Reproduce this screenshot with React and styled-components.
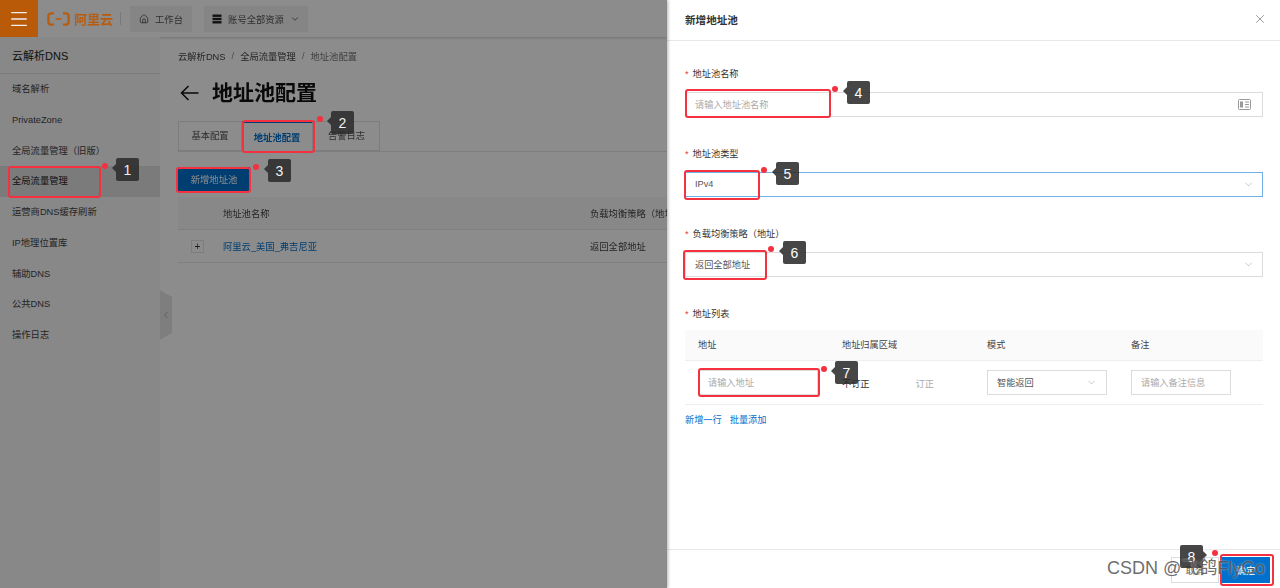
import React from 'react';
import styled, { createGlobalStyle } from 'styled-components';
import { ChevronDown, ChevronLeft, Home, Menu, X } from 'lucide-react';

const GlobalStyle = createGlobalStyle`
  html, body {
    margin: 0;
    padding: 0;
    background: #8c8c8c;
  }
  body {
    font-family: "Liberation Sans", "Noto Sans CJK SC", sans-serif;
    font-size: 9px;
    color: #333;
  }
  * {
    box-sizing: border-box;
  }
`;

const navItems = [
  '域名解析',
  'PrivateZone',
  '全局流量管理（旧版）',
  '全局流量管理',
  '运营商DNS缓存刷新',
  'IP地理位置库',
  '辅助DNS',
  '公共DNS',
  '操作日志',
];

const marks = [
  { n: 1, x: 8, y: 166, w: 93, h: 32, dotX: 105, dotY: 166, badgeX: 116, badgeY: 158 },
  { n: 2, x: 242, y: 120, w: 73, h: 33, dotX: 320, dotY: 119, badgeX: 331, badgeY: 111 },
  { n: 3, x: 176, y: 167, w: 75, h: 26, dotX: 256, dotY: 167, badgeX: 268, badgeY: 159 },
  { n: 4, x: 685, y: 89, w: 146, h: 29, dotX: 835, dotY: 89, badgeX: 847, badgeY: 81 },
  { n: 5, x: 684, y: 170, w: 76, h: 30, dotX: 764, dotY: 170, badgeX: 776, badgeY: 162 },
  { n: 6, x: 683, y: 250, w: 84, h: 30, dotX: 771, dotY: 249, badgeX: 783, badgeY: 241 },
  { n: 7, x: 698, y: 368, w: 122, h: 29, dotX: 824, dotY: 369, badgeX: 835, badgeY: 361 },
  { n: 8, x: 1220, y: 554, w: 54, h: 32, dotX: 1215, dotY: 553, badgeX: 1180, badgeY: 545, flip: true },
];

export default function App() {
  return (
    <Page>
      <GlobalStyle />
      <Console>
        <TopBar>
          <MenuCell>
            <Menu size={22} strokeWidth={1.4} color="#eee" />
          </MenuCell>
          <Logo>
            <svg width="23" height="14" viewBox="0 0 23 14" fill="none" stroke="#b85c10" strokeWidth="2.4">
              <path d="M7 1.4H4a2.6 2.6 0 0 0-2.6 2.6v6A2.6 2.6 0 0 0 4 12.6h3" />
              <path d="M16 1.4h3A2.6 2.6 0 0 1 21.6 4v6a2.6 2.6 0 0 1-2.6 2.6h-3" />
              <path d="M8.5 7h6" strokeWidth="1.6" />
            </svg>
            <LogoText>阿里云</LogoText>
          </Logo>
          <BarDivider />
          <BarButton $width="62px">
            <Home size={10} strokeWidth={2} />
            工作台
          </BarButton>
          <BarButton $width="104px">
            <svg width="10" height="10" viewBox="0 0 10 10" fill="#222">
              <rect x="0.5" y="0.5" width="9" height="2.4" />
              <rect x="0.5" y="3.8" width="9" height="2.4" />
              <rect x="0.5" y="7.1" width="9" height="2.4" />
            </svg>
            账号全部资源
            <ChevronDown size={10} strokeWidth={2} />
          </BarButton>
        </TopBar>
        <Body>
          <Sidebar>
            <SideTitle>云解析DNS</SideTitle>
            {navItems.map((item, i) => (
              <NavItem key={item} $active={i === 3}>
                {item}
              </NavItem>
            ))}
            <Collapse>
              <ChevronLeft size={12} strokeWidth={1} color="#777" />
            </Collapse>
          </Sidebar>
          <Main>
            <Breadcrumb>
              <span>云解析DNS</span>
              <Slash>/</Slash>
              <span>全局流量管理</span>
              <Slash>/</Slash>
              <Faint>地址池配置</Faint>
            </Breadcrumb>
            <TitleRow>
              <svg width="19" height="16" viewBox="0 0 19 16" fill="none" stroke="#111" strokeWidth="1.5">
                <path d="M18.5 8H1.5M8.5 1L1.5 8l7 7" />
              </svg>
              <Title>地址池配置</Title>
            </TitleRow>
            <Tabs>
              <Tab>基本配置</Tab>
              <Tab $active>地址池配置</Tab>
              <Tab $wide>告警日志</Tab>
            </Tabs>
            <PrimaryButton>新增地址池</PrimaryButton>
            <PoolHead>
              <span />
              <span>地址池名称</span>
              <span>负载均衡策略（地址）</span>
            </PoolHead>
            <PoolRow>
              <Expand>+</Expand>
              <PoolLink>阿里云_美国_弗吉尼亚</PoolLink>
              <span>返回全部地址</span>
            </PoolRow>
          </Main>
        </Body>
      </Console>

      <Drawer>
        <DrawerHead>
          新增地址池
          <X size={14} strokeWidth={1} color="#555" />
        </DrawerHead>
        <Form>
          <Field>
            <Label>地址池名称</Label>
            <Control>
              <Placeholder>请输入地址池名称</Placeholder>
              <IdCard width="13" height="11" viewBox="0 0 13 11" fill="none">
                <rect x="0.5" y="0.5" width="12" height="10" rx="1" stroke="#999" />
                <rect x="2" y="2.5" width="3" height="6" fill="#999" />
                <path d="M7 3h4M7 5.5h4M7 8h4" stroke="#999" />
              </IdCard>
            </Control>
          </Field>
          <Field>
            <Label>地址池类型</Label>
            <Control $focus>
              IPv4
              <ChevronDown size={11} strokeWidth={1} color="#888" />
            </Control>
          </Field>
          <Field>
            <Label>负载均衡策略（地址）</Label>
            <Control>
              返回全部地址
              <ChevronDown size={11} strokeWidth={1} color="#888" />
            </Control>
          </Field>
          <Label>地址列表</Label>
          <AddressHead>
            <span>地址</span>
            <span>地址归属区域</span>
            <span>模式</span>
            <span>备注</span>
          </AddressHead>
          <AddressRow>
            <CellControl $width="120px">
              <Placeholder>请输入地址</Placeholder>
            </CellControl>
            <Correction>
              <span>不订正</span>
              <Disabled>订正</Disabled>
            </Correction>
            <CellControl $width="120px">
              智能返回
              <ChevronDown size={11} strokeWidth={1} color="#888" />
            </CellControl>
            <CellControl $width="100px">
              <Placeholder>请输入备注信息</Placeholder>
            </CellControl>
          </AddressRow>
          <Links>
            <span>新增一行</span>
            <span>批量添加</span>
          </Links>
        </Form>
        <DrawerFoot>
          <GhostButton>取消</GhostButton>
          <SubmitButton>确定</SubmitButton>
        </DrawerFoot>
      </Drawer>

      {marks.map((m) => (
        <React.Fragment key={m.n}>
          <RedBox $x={m.x} $y={m.y} $w={m.w} $h={m.h} />
          <RedDot $x={m.dotX} $y={m.dotY} />
          <Badge $x={m.badgeX} $y={m.badgeY} $flip={m.flip}>
            {m.n}
          </Badge>
        </React.Fragment>
      ))}
      <Watermark>CSDN @飞鸽FlyGo</Watermark>
    </Page>
  );
}

const Page = styled.div`
  position: relative;
  display: flex;
  width: 1280px;
  height: 588px;
  overflow: hidden;
  filter: blur(0.3px);
`;

const Console = styled.div`
  position: relative;
  display: flex;
  flex-direction: column;
  width: 667px;
  height: 100%;
  overflow: hidden;
  background: #fff;
  box-shadow: 1px 0 3px rgba(0, 0, 0, 0.3);
  z-index: 1;
  &::after {
    content: '';
    position: absolute;
    inset: 0;
    background: rgba(0, 0, 0, 0.45);
  }
`;

const TopBar = styled.div`
  display: flex;
  align-items: center;
  flex: none;
  height: 37px;
  background: #fff;
  box-shadow: 0 1px 3px rgba(0, 0, 0, 0.2);
`;

const MenuCell = styled.div`
  position: relative;
  z-index: 1;
  display: flex;
  align-items: center;
  justify-content: center;
  width: 38px;
  height: 100%;
  background: #b85a08;
`;

const Logo = styled.div`
  position: relative;
  z-index: 1;
  display: flex;
  align-items: center;
  gap: 4px;
  margin-left: 9px;
`;

const LogoText = styled.span`
  font-size: 13px;
  font-weight: 700;
  color: #b85c10;
`;

const BarDivider = styled.div`
  width: 1px;
  height: 13px;
  margin: 0 9px 0 7px;
  background: #ddd;
`;

const BarButton = styled.div`
  display: flex;
  align-items: center;
  justify-content: center;
  gap: 6px;
  width: ${(p) => p.$width};
  height: 26px;
  margin-right: 12px;
  background: #f2f2f2;
  font-size: 9.3px;
  color: #555;
  svg {
    flex: none;
  }
`;

const Body = styled.div`
  display: flex;
  flex: 1;
  min-height: 0;
`;

const Sidebar = styled.nav`
  position: relative;
  flex: none;
  width: 160px;
  background: #f7f7f7;
`;

const SideTitle = styled.div`
  height: 37px;
  padding: 10px 12px 0;
  border-bottom: 1px solid #e3e3e3;
  font-size: 11px;
  color: #222;
`;

const NavItem = styled.div`
  height: 30.75px;
  line-height: 30px;
  padding-left: 12px;
  font-size: 9.3px;
  color: ${(p) => (p.$active ? '#222' : '#444')};
  background: ${(p) => (p.$active ? '#e0e0e0' : 'transparent')};
`;

const Collapse = styled.div`
  position: absolute;
  top: 253px;
  left: 160px;
  display: flex;
  align-items: center;
  justify-content: center;
  width: 12px;
  height: 50px;
  background: #e6e6e6;
  clip-path: polygon(0 0, 100% 14%, 100% 86%, 0 100%);
`;

const Main = styled.main`
  display: flex;
  flex-direction: column;
  flex: 1;
  min-width: 0;
  padding-left: 18px;
`;

const Breadcrumb = styled.div`
  display: flex;
  align-items: center;
  gap: 6px;
  height: 14px;
  margin-top: 12px;
  font-size: 9.3px;
  color: #444;
`;

const Slash = styled.span`
  color: #888;
`;

const Faint = styled.span`
  color: #777;
`;

const TitleRow = styled.div`
  display: flex;
  align-items: center;
  gap: 13px;
  height: 30px;
  margin-top: 15px;
  padding-left: 2px;
`;

const Title = styled.h1`
  margin: 0;
  font-size: 21px;
  font-weight: 700;
  line-height: 30px;
  color: #111;
`;

const Tabs = styled.div`
  display: flex;
  height: 31px;
  margin-top: 13px;
  border-bottom: 1px solid #e3e3e3;
`;

const Tab = styled.div`
  display: flex;
  align-items: center;
  justify-content: center;
  width: ${(p) => (p.$active ? '71px' : p.$wide ? '67px' : '64px')};
  padding-bottom: 2px;
  margin-bottom: ${(p) => (p.$active ? '-1px' : '0')};
  background: #fff;
  border: 1px solid #e3e3e3;
  border-left-width: ${(p) => (p.$active ? '0' : '1px')};
  border-top: ${(p) => (p.$active ? '2px solid #0070cc' : '1px solid #e3e3e3')};
  border-bottom: ${(p) => (p.$active ? '0' : '1px solid #e3e3e3')};
  font-size: 9.3px;
  color: ${(p) => (p.$active ? '#0070cc' : '#555')};
  font-weight: ${(p) => (p.$active ? 700 : 400)};
`;

const PrimaryButton = styled.button`
  width: 72px;
  height: 25px;
  margin-top: 15px;
  padding: 0 0 2px;
  border: 0;
  background: #0070cc;
  color: #fff;
  font: inherit;
  font-size: 9.3px;
`;

const PoolHead = styled.div`
  display: grid;
  grid-template-columns: 45px 367px 200px;
  align-items: center;
  flex: none;
  width: 700px;
  height: 33px;
  margin-top: 5px;
  background: #f7f7f7;
  border-bottom: 1px solid #e8e8e8;
  font-size: 9.3px;
  color: #444;
  white-space: nowrap;
`;

const PoolRow = styled(PoolHead)`
  margin-top: 0;
  background: #fff;
`;

const Expand = styled.span`
  display: flex;
  align-items: center;
  justify-content: center;
  width: 13px;
  height: 13px;
  margin-left: 13px;
  border: 1px solid #e3e3e3;
  font-size: 10px;
  color: #333;
`;

const PoolLink = styled.span`
  color: #0070cc;
`;

const Drawer = styled.aside`
  display: flex;
  flex-direction: column;
  flex: none;
  width: 613px;
  height: 100%;
  background: #fff;
`;

const DrawerHead = styled.header`
  display: flex;
  align-items: center;
  justify-content: space-between;
  flex: none;
  height: 41px;
  padding: 0 13px 2px 18px;
  border-bottom: 1px solid #e8e8e8;
  font-size: 10.6px;
  font-weight: 700;
  color: #333;
`;

const Form = styled.div`
  flex: 1;
  padding: 24px 17px 0 18px;
`;

const Field = styled.div`
  height: 80px;
`;

const Label = styled.div`
  height: 18px;
  line-height: 18px;
  font-size: 9.2px;
  color: #333;
  &::before {
    content: '*';
    margin-right: 4px;
    color: #e5342a;
  }
`;

const Control = styled.div`
  display: flex;
  align-items: center;
  justify-content: space-between;
  height: 25px;
  margin-top: 9px;
  padding: 0 8px 1px 9px;
  border: 1px solid ${(p) => (p.$focus ? '#6fb0e8' : '#dcdcdc')};
  font-size: 9.2px;
  color: #555;
`;

const IdCard = styled.svg`
  margin-right: 3px;
`;

const Placeholder = styled.span`
  color: #aaa;
`;

const AddressHead = styled.div`
  display: grid;
  grid-template-columns: 13px 144px 145px 144px 1fr;
  align-items: center;
  height: 31px;
  margin-top: 7px;
  padding-bottom: 2px;
  background: #fafafa;
  border-bottom: 1px solid #eee;
  font-size: 9.2px;
  color: #444;
  span:first-child {
    grid-column: 2;
  }
`;

const AddressRow = styled.div`
  display: grid;
  grid-template-columns: 13px 144px 145px 144px 1fr;
  align-items: center;
  height: 44px;
  border-bottom: 1px solid #eee;
  font-size: 9.2px;
  > :first-child {
    grid-column: 2;
  }
`;

const CellControl = styled.div`
  display: flex;
  align-items: center;
  justify-content: space-between;
  width: ${(p) => p.$width};
  height: 25px;
  padding: 0 9px 1px;
  border: 1px solid #dcdcdc;
  color: #555;
`;

const Correction = styled.div`
  display: flex;
  gap: 46px;
  color: #333;
`;

const Disabled = styled.span`
  color: #aaa;
`;

const Links = styled.div`
  display: flex;
  gap: 8px;
  margin-top: 7px;
  font-size: 9.2px;
  color: #0070cc;
`;

const DrawerFoot = styled.footer`
  display: flex;
  justify-content: flex-end;
  gap: 3px;
  flex: none;
  height: 39px;
  padding: 7px 10px 0 0;
  border-top: 1px solid #e8e8e8;
`;

const GhostButton = styled.button`
  width: 48px;
  height: 26px;
  padding: 0;
  border: 1px solid #ddd;
  background: #fff;
  color: #555;
  font: inherit;
  font-size: 9.2px;
`;

const SubmitButton = styled(GhostButton)`
  border: 0;
  background: #0070cc;
  color: #fff;
`;

const RedBox = styled.div`
  position: absolute;
  z-index: 2;
  left: ${(p) => p.$x}px;
  top: ${(p) => p.$y}px;
  width: ${(p) => p.$w}px;
  height: ${(p) => p.$h}px;
  border: 2px solid #f5303f;
  border-radius: 3px;
`;

const RedDot = styled.div`
  position: absolute;
  z-index: 2;
  left: ${(p) => p.$x - 3}px;
  top: ${(p) => p.$y - 3}px;
  width: 6px;
  height: 6px;
  border-radius: 50%;
  background: #f5303f;
`;

const Badge = styled.div`
  position: absolute;
  z-index: 2;
  left: ${(p) => p.$x}px;
  top: ${(p) => p.$y}px;
  display: flex;
  align-items: center;
  justify-content: center;
  width: 23px;
  height: 23px;
  border-radius: 2px;
  background: rgb(45, 45, 45);
  opacity: 0.88;
  color: #fff;
  font-size: 14px;
  &::before {
    content: '';
    position: absolute;
    top: 6px;
    ${(p) => (p.$flip ? 'right: -4px;' : 'left: -4px;')}
    border-top: 4px solid transparent;
    border-bottom: 4px solid transparent;
    ${(p) =>
      p.$flip ? 'border-left: 4px solid rgb(45, 45, 45);' : 'border-right: 4px solid rgb(45, 45, 45);'}
  }
`;

const Watermark = styled.div`
  position: absolute;
  z-index: 3;
  left: 1107px;
  top: 557px;
  font-size: 18px;
  line-height: 22px;
  color: rgba(70, 70, 70, 0.8);
  text-shadow: 0 0 2px rgba(255, 255, 255, 0.6);
  white-space: nowrap;
`;
